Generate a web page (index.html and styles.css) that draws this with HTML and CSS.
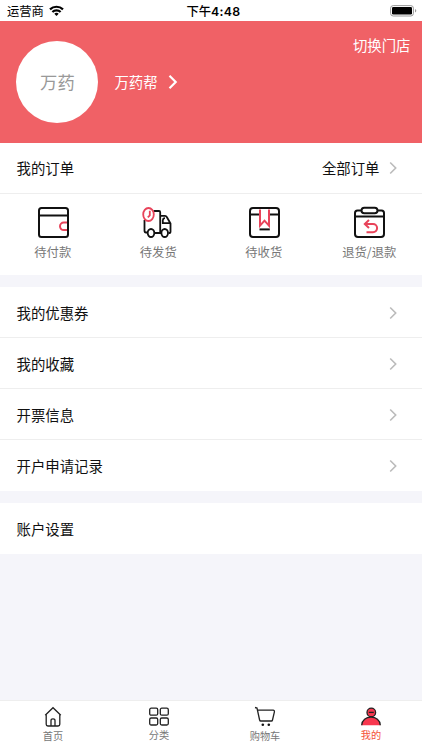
FILE: index.html
```html
<!DOCTYPE html>
<html lang="zh-CN">
<head>
<meta charset="utf-8">
<title>我的</title>
<link rel="stylesheet" href="styles.css">
</head>
<body>
<div class="status">
  <div class="carrier"><span>运营商</span>
    <svg width="15" height="12" viewBox="0 0 15 12" fill="none" stroke="#000" stroke-width="2.2"><path d="M1 4.4a9.3 9.3 0 0 1 13 0M3.4 7a5.8 5.8 0 0 1 8.2 0"/><path d="M7.5 11L5.3 8.8a3.1 3.1 0 0 1 4.4 0z" fill="#000" stroke="none"/></svg>
  </div>
  <div class="time">下午<b>4:48</b></div>
  <svg class="battery" width="27" height="12" viewBox="0 0 27 12"><rect x=".6" y=".6" width="22.8" height="10.4" rx="2.6" fill="none" stroke="#999"/><rect x="2" y="2" width="20" height="7.6" rx="1.3"/><path d="M25 4v3.6q1.3-.6 1.3-1.8T25 4z" fill="#999"/></svg>
</div>
<header class="profile">
  <div class="avatar">万药</div>
  <div class="name">万药帮</div>
  <svg class="name-arrow" width="10" height="16" viewBox="0 0 10 16" fill="none" stroke="#fff" stroke-width="2.2"><path d="M1.500 1.800L7.700 8l-6.200 6.200"/></svg>
  <div class="switch">切换门店</div>
</header>
<section class="orders">
  <div class="row"><span>我的订单</span><span class="all">全部订单</span><svg class="arrow" viewBox="0 0 8 14"><path d="M1.200 1.500L6.700 7l-5.500 5.500"/></svg></div>
  <div class="states">
    <div class="state">
      <svg viewBox="0 0 32 32"><rect x="2" y="2" width="29" height="29" rx="2.5"/><path d="M2 9.5h29"/><path class="red" d="M30 16.5h-3.200a3.700 3.700 0 0 0 0 7.600H30"/></svg>
      <span>待付款</span>
    </div>
    <div class="state">
      <svg class="truck" viewBox="0 0 32 32"><path d="M11.500 5h5.500q1.200 0 1.200 1.200V26.500M2.500 14v10.500q0 2 1.500 2h1.500M12.300 27h7M18.200 9.800H23q1.200 0 1.800 1.200l3.700 6.500V26q0 1-1 1h-1M21 14q0-1.800 2-1.800M20.800 14v3.200h7"/><ellipse cx="9" cy="27" rx="3.300" ry="4"/><ellipse cx="22.700" cy="27" rx="3.300" ry="4"/><ellipse class="red" cx="6.500" cy="8.500" rx="5.300" ry="6.500"/><path class="red" d="M7.800 4.800v4.500l-2 2"/></svg>
      <span>待发货</span>
    </div>
    <div class="state">
      <svg viewBox="0 0 32 32"><rect x="2" y="2" width="29" height="29" rx="3"/><path d="M2 8.500h9.500M22 8.500h9"/><path class="red" d="M12 3.500v16.200l4.500-5 4.500 5V3.500"/><path d="M11.500 23.400h10.300"/></svg>
      <span>待收货</span>
    </div>
    <div class="state">
      <svg viewBox="0 0 32 32"><path d="M8 4.500H4.500Q2 4.500 2 7v21q0 3 3 3h23q3 0 3-3V7q0-2.500-2.500-2.500H25M2 10.500h29"/><rect x="8.500" y="1.700" width="16" height="5.600" rx="2.800"/><path class="red" d="M16 14l-4.200 4L16 22M12 18h8a4.100 4.100 0 0 1 0 8.200h-6.500"/></svg>
      <span>退货/退款</span>
    </div>
  </div>
</section>
<section class="menu">
  <div class="row"><span>我的优惠券</span><svg class="arrow" viewBox="0 0 8 14"><path d="M1.200 1.500L6.700 7l-5.500 5.500"/></svg></div>
  <div class="row"><span>我的收藏</span><svg class="arrow" viewBox="0 0 8 14"><path d="M1.200 1.500L6.700 7l-5.500 5.500"/></svg></div>
  <div class="row"><span>开票信息</span><svg class="arrow" viewBox="0 0 8 14"><path d="M1.200 1.500L6.700 7l-5.500 5.500"/></svg></div>
  <div class="row"><span>开户申请记录</span><svg class="arrow" viewBox="0 0 8 14"><path d="M1.200 1.500L6.700 7l-5.500 5.500"/></svg></div>
</section>
<section class="menu">
  <div class="row"><span>账户设置</span></div>
</section>
<nav class="tabs">
  <div class="tab low">
    <svg viewBox="0 0 22 22"><path d="M3.200 9.200L11 1.700l7.800 7.500M4.200 8.500v9.800q0 1.700 1.700 1.700h10.200q1.700 0 1.700-1.700V8.500M9 19.700v-5.200q0-1.600 2-1.600t2 1.600v5.200"/></svg>
    <span>首页</span>
  </div>
  <div class="tab">
    <svg viewBox="0 0 22 22"><rect x="1.700" y="2.200" width="8" height="7" rx="1.500"/><rect x="12.300" y="2.200" width="8" height="7" rx="1.500"/><rect x="1.700" y="12" width="8" height="7" rx="1.500"/><rect x="12.300" y="12" width="8" height="7" rx="1.500"/></svg>
    <span>分类</span>
  </div>
  <div class="tab low">
    <svg viewBox="0 0 22 22"><path d="M1 1.500l2 .5 2.600 12q.2 1 1.200 1h10.600q.9 0 1.100-1l1.900-8q.2-1.800-1.300-1.800H3.700"/><circle cx="8.800" cy="18.700" r="1.300" fill="#111" stroke="none"/><circle cx="14.800" cy="18.700" r="1.300" fill="#111" stroke="none"/></svg>
    <span>购物车</span>
  </div>
  <div class="tab active">
    <svg viewBox="0 0 22 22"><path class="body" d="M1.700 19.200c.3-5 4.300-8 9.300-8s9 3 9.300 8z"/><path d="M1.700 19.200c.3-5 4.300-8 9.300-8s9 3 9.300 8"/><circle class="body" cx="11.300" cy="6.400" r="4.300"/><circle cx="11.300" cy="6.400" r="4.300"/><path d="M8.800 6.400h5"/></svg>
    <span>我的</span>
  </div>
</nav>
</body>
</html>
```
FILE: styles.css
```css
* { box-sizing: border-box; }
body {
  margin: 0;
  height: 750px;
  display: flex;
  flex-direction: column;
  overflow: hidden;
  background: #f5f5fa;
  color: #111;
  font: 14.4px/20px "Noto Sans CJK SC", sans-serif;
}
svg { display: block; flex: none; }
.status {
  height: 21px;
  flex: none;
  display: grid;
  grid-template-columns: 1fr auto 1fr;
  align-items: center;
  padding: 0 5px 0 7px;
  background: #fff;
  color: #000;
  font-size: 12.3px;
}
.carrier { display: flex; align-items: center; gap: 5px; }
.time { font-weight: 500; padding: 1px 0 0 3px; }
.time b { font-family: Inter, sans-serif; font-weight: 600; font-size: 12.3px; letter-spacing: .35px; }
.battery { justify-self: end; }
.profile {
  position: relative;
  height: 122px;
  flex: none;
  display: flex;
  align-items: center;
  padding-left: 16.4px;
  background: #f06166;
  color: #fff;
}
.avatar {
  width: 82px;
  height: 82px;
  border-radius: 50%;
  background: #fff;
  color: #999;
  font-size: 17.3px;
  display: flex;
  align-items: center;
  justify-content: center;
}
.name { margin-left: 16px; }
.name-arrow { margin-left: 10px; }
.switch { position: absolute; right: 11.5px; top: 14px; }
.orders { height: 132px; background: #fff; flex: none; }
.menu { margin-top: 12px; background: #fff; flex: none; }
.row {
  height: 51px;
  display: flex;
  align-items: center;
  padding: 0 25px 0 16.5px;
  border-bottom: 1px solid #eee;
}
.menu .row { padding-top: 1px; }
.menu .row:last-child { border-bottom-color: #fff; }
.all { margin-left: auto; }
.arrow {
  width: 8px;
  height: 14px;
  margin-left: auto;
  fill: none;
  stroke: #bbb;
  stroke-width: 1.6;
}
.all + .arrow { margin-left: 9.5px; }
.states { display: grid; grid-template-columns: repeat(4, 1fr); padding-top: 12px; }
.state {
  display: flex;
  flex-direction: column;
  align-items: center;
  color: #777;
  font-size: 12.3px;
}
.state svg {
  width: 32px;
  height: 32px;
  margin: 0 0 4px 0;
  fill: none;
  stroke: #111;
  stroke-width: 2;
}
.state .truck { stroke-width: 1.8; }
.state .red { stroke: #e8435a; }
.tabs {
  height: 50px;
  margin: auto -2px 0 0;
  flex: none;
  display: grid;
  grid-template-columns: repeat(4, 1fr);
  padding-top: 6px;
  background: #fff;
  border-top: 1px solid #eee;
}
.tab {
  display: flex;
  flex-direction: column;
  align-items: center;
  color: #777;
  font-size: 10.2px;
  line-height: 14px;
}
.tab svg { width: 22px; height: 22px; margin-top: -1px; fill: none; stroke: #222; stroke-width: 1.3; }
.tab.low span { margin-top: 1px; }
.tab.active { color: #f55237; }
.tab .body { fill: #f8384f; stroke: none; }
```
